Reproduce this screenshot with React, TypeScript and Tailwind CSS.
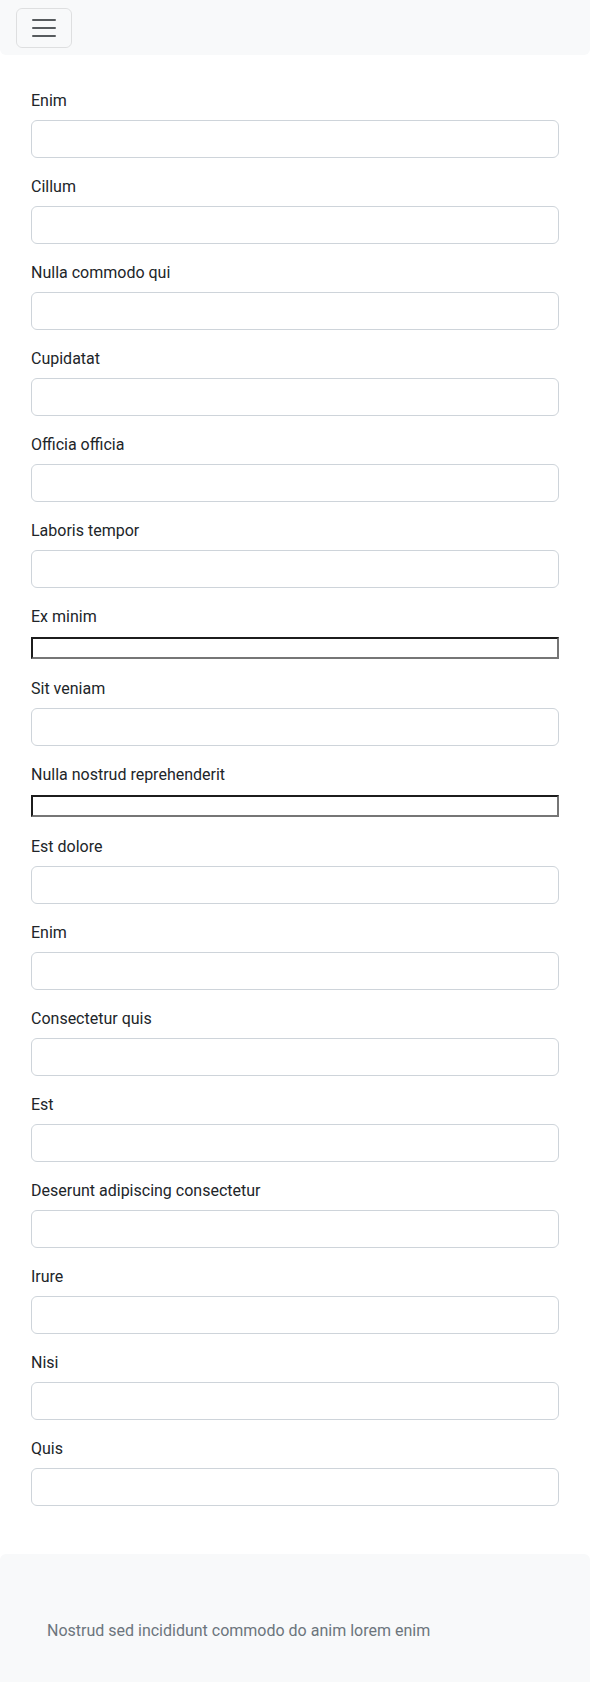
import React from 'react';

type Field = { label: string; plain?: boolean };

const fields: Field[] = [
  { label: 'Enim' },
  { label: 'Cillum' },
  { label: 'Nulla commodo qui' },
  { label: 'Cupidatat' },
  { label: 'Officia officia' },
  { label: 'Laboris tempor' },
  { label: 'Ex minim', plain: true },
  { label: 'Sit veniam' },
  { label: 'Nulla nostrud reprehenderit', plain: true },
  { label: 'Est dolore' },
  { label: 'Enim' },
  { label: 'Consectetur quis' },
  { label: 'Est' },
  { label: 'Deserunt adipiscing consectetur' },
  { label: 'Irure' },
  { label: 'Nisi' },
  { label: 'Quis' },
];

const TogglerIcon = () => (
  <svg width="30" height="30" viewBox="0 0 30 30" fill="none">
    <path
      d="M4 7h22M4 15h22M4 23h22"
      stroke="rgba(33,37,41,0.75)"
      strokeWidth="2"
      strokeLinecap="round"
      strokeMiterlimit="10"
    />
  </svg>
);

const FormRow = ({ field, idx }: { field: Field; idx: number }) => {
  const id = `field-${idx}`;
  return (
    <div className="mb-4">
      <label htmlFor={id} className="block pt-px mb-[7px] text-base leading-6 text-[#212529]">
        {field.label}
      </label>
      {field.plain ? (
        <div className="h-6 pt-px">
          <input
            id={id}
            type="text"
            className="block w-full h-[22px] bg-white border-2 border-t-[#1c1c1c] border-l-[#1c1c1c] border-b-[#767676] border-r-[#767676] outline-none"
          />
        </div>
      ) : (
        <input
          id={id}
          type="text"
          className="block w-full h-[38px] px-3 bg-white border border-[#ced4da] rounded-[6px] outline-none"
        />
      )}
    </div>
  );
};

export default function App() {
  return (
    <div className="min-h-[1682px] flex flex-col bg-white font-['Roboto','Liberation_Sans',sans-serif] text-[#212529]">
      {/* navbar */}
      <nav className="h-[55px] bg-[#f8f9fa] rounded-b-[6px] flex items-center px-4">
        <button
          type="button"
          className="w-14 h-10 flex items-center justify-center border border-[rgba(0,0,0,0.1)] rounded-[6px]"
        >
          <TogglerIcon />
        </button>
      </nav>

      {/* form */}
      <main className="px-[31px] pt-[33px] pb-8">
        {fields.map((f, i) => (
          <FormRow key={i} field={f} idx={i} />
        ))}
      </main>

      {/* footer */}
      <footer className="mt-auto bg-[#f8f9fa] rounded-t-[6px] px-[47px] pt-[65px] pb-[39px]">
        <p className="text-base leading-6 text-[#6c757d]">
          Nostrud sed incididunt commodo do anim lorem enim
        </p>
      </footer>
    </div>
  );
}
